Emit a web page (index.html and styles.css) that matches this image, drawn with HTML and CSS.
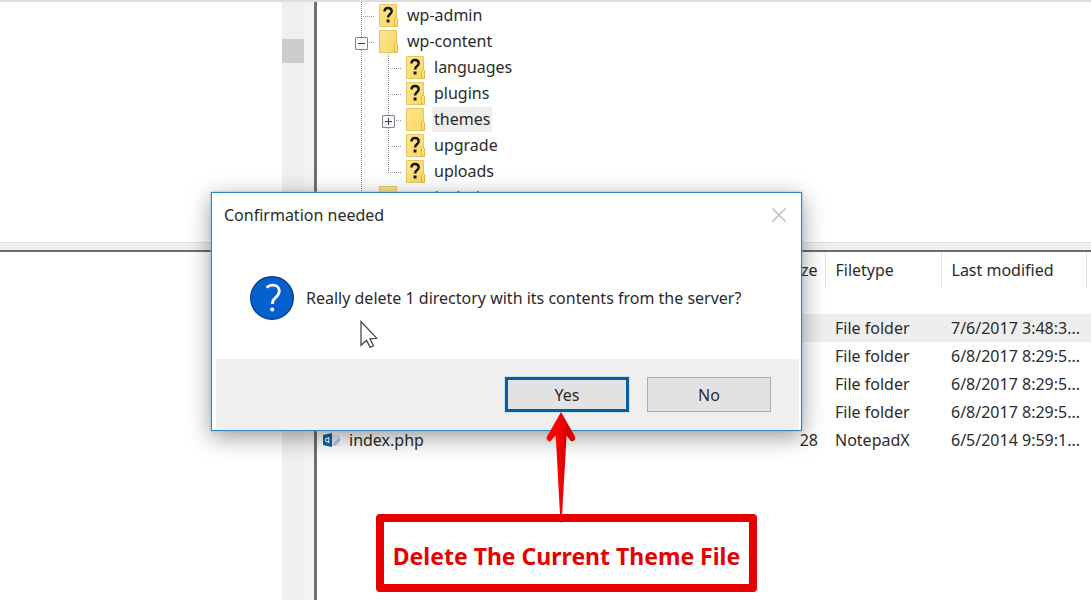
FILE: index.html
```html
<!DOCTYPE html>
<html lang="en">
<head>
<meta charset="utf-8">
<title>Confirmation needed</title>
<link rel="stylesheet" href="styles.css">
</head>
<body>
<svg class="defs" aria-hidden="true">
  <defs>
    <linearGradient id="gold" x1="0" y1="0" x2="1" y2="1">
      <stop offset="0" stop-color="#ffe58c"/><stop offset="1" stop-color="#f8d767"/>
    </linearGradient>
    <symbol id="folder" viewBox="0 0 19 23">
      <path d="M.5.5h17v14l1 1v7H.5z" fill="url(#gold)" stroke="#e6c660"/>
      <path d="M15.500 22v-7.500l1.500-1.500 1.500 1.500V22z" fill="#ffe07a" stroke="#e2b93c"/>
    </symbol>
    <symbol id="unknown" viewBox="0 0 19 23">
      <use href="#folder" width="19" height="23"/>
      <path d="M5.500 7.500C5.500 4.700 7 4 9 4s3.700 1 3.700 3.300c0 3-3.700 3-3.700 6.200" fill="none" stroke="#171717" stroke-width="2.400"/>
      <path d="M7.600 15.500h2.900v3H7.600z" fill="#171717"/>
    </symbol>
  </defs>
</svg>
<main class="app">
  <div class="band upper">
    <section class="local"><div class="track"><div class="thumb"></div></div></section>
    <section class="remote">
      <ul class="tree">
        <li><span class="guide tee"></span><svg class="folder"><use href="#unknown"/></svg><span class="label">wp-admin</span></li>
        <li><span class="guide tee"><button class="toggle" aria-label="Collapse wp-content"><svg viewBox="0 0 11 11"><path d="M2 5.500h7"/></svg></button></span><svg class="folder"><use href="#folder"/></svg><span class="label">wp-content</span></li>
        <li><span class="guide"></span><span class="guide tee"></span><svg class="folder"><use href="#unknown"/></svg><span class="label">languages</span></li>
        <li><span class="guide"></span><span class="guide tee"></span><svg class="folder"><use href="#unknown"/></svg><span class="label">plugins</span></li>
        <li><span class="guide"></span><span class="guide tee"><button class="toggle" aria-label="Expand themes"><svg viewBox="0 0 11 11"><path d="M2 5.500h7M5.500 2v7"/></svg></button></span><svg class="folder"><use href="#folder"/></svg><span class="label selected">themes</span></li>
        <li><span class="guide"></span><span class="guide tee"></span><svg class="folder"><use href="#unknown"/></svg><span class="label">upgrade</span></li>
        <li><span class="guide"></span><span class="guide tee last"></span><svg class="folder"><use href="#unknown"/></svg><span class="label">uploads</span></li>
        <li><span class="guide tee"></span><svg class="folder"><use href="#folder"/></svg><span class="label">wp-includes</span></li>
      </ul>
    </section>
  </div>
  <div class="splitter"></div>
  <div class="band lower">
    <section class="local"><div class="track"></div></section>
    <section class="remote">
      <table class="files">
        <colgroup><col><col class="c-size"><col class="c-type"><col class="c-date"><col class="c-end"></colgroup>
        <thead><tr><th></th><th class="num">Filesize</th><th>Filetype</th><th>Last modified</th><th></th></tr></thead>
        <tbody>
          <tr><td></td><td></td><td></td><td></td><td></td></tr>
          <tr class="selected"><td></td><td></td><td>File folder</td><td>7/6/2017 3:48:3...</td><td></td></tr>
          <tr><td></td><td></td><td>File folder</td><td>6/8/2017 8:29:5...</td><td></td></tr>
          <tr><td></td><td></td><td>File folder</td><td>6/8/2017 8:29:5...</td><td></td></tr>
          <tr><td></td><td></td><td>File folder</td><td>6/8/2017 8:29:5...</td><td></td></tr>
          <tr><td><div class="name"><svg class="php" viewBox="0 0 18 16"><path d="M8 3h9v11H8z" fill="#e9eef5"/><path d="M0 3l9-2v14l-9-2z" fill="#0a62b0"/><path d="M5.800 5.500v5L2.500 8.800V7.200z" fill="none" stroke="#e8f4ff" stroke-width="1.200"/><path d="M10.500 12.500l5-6 1.500 1.300-5 5.500z" fill="#c5cedb" stroke="#93a0b3" stroke-width=".6"/></svg>index.php</div></td><td class="num">28</td><td>NotepadX</td><td>6/5/2014 9:59:1...</td><td></td></tr>
        </tbody>
      </table>
    </section>
  </div>
</main>

<div class="dialog" role="dialog" aria-labelledby="dialog-title">
  <header class="titlebar">
    <h1 id="dialog-title">Confirmation needed</h1>
    <button class="close" aria-label="Close"><svg viewBox="0 0 16 16"><path d="M1.500 1.500l13 13M14.500 1.500l-13 13"/></svg></button>
  </header>
  <div class="message">
    <svg class="question" viewBox="0 0 44 44"><circle cx="22" cy="22" r="21.300" fill="#0560cd" stroke="#063f93" stroke-width="1.400"/><path d="M16.500 11.500c2-1.700 4-2.300 6.200-2.300 4 0 6.600 2.200 6.600 5.700 0 3-1.700 4.700-3.700 6.600-2.200 2-3.300 3.400-3.300 6.500" fill="none" stroke="#fff" stroke-width="2.800"/><circle cx="22.200" cy="33.500" r="2.100" fill="#fff"/></svg>
    <p>Really delete 1 directory with its contents from the server?</p>
  </div>
  <footer class="actions">
    <button class="btn primary">Yes</button>
    <button class="btn">No</button>
  </footer>
</div>

<svg class="cursor" viewBox="0 0 18 29"><path d="M1 1.500v23.800l5.500-4.900 3.600 7 3.400-1.700-3.500-6.800 6.800-.6z" fill="#fff" stroke="#4a4a4a" stroke-width="1.300"/></svg>
<svg class="arrow" viewBox="0 0 32 112">
  <defs><linearGradient id="red"><stop offset=".4" stop-color="#f80505"/><stop offset=".65" stop-color="#d90000"/></linearGradient></defs>
  <path d="M16 0L30 24.500C31.500 28 27 31 25 28L21.500 23.500C20 54 18 86 16.700 110.500H15.500C14 86 12.500 54 10.700 23.500L6.500 28C4.500 31 .5 28 2 24.500z" fill="url(#red)"/>
</svg>
<div class="callout">Delete The Current Theme File</div>
</body>
</html>
```
FILE: styles.css
```css
* { box-sizing: border-box; }
body {
  margin: 0;
  background: #fff;
  color: #2b2b2b;
  font: 16px/26px "Noto Sans", "Open Sans", sans-serif;
  overflow: hidden;
}
button { font: inherit; color: inherit; padding: 0; }
.defs { position: absolute; width: 0; height: 0; }

.app { display: flex; flex-direction: column; height: 100vh; border-top: 2px solid #dedede; }
.band { display: flex; min-height: 0; }
.upper { flex: 0 0 240px; }
.lower { flex: 1; }
.splitter { flex: 0 0 10px; background: #efefef; border-top: 1px solid #e0e0e0; border-bottom: 2px solid #6d6d6d; }

.local { flex: 0 0 314px; display: flex; justify-content: flex-end; border-right: 10px solid #f3f3f3; }
.track { width: 22px; background: #efefef; padding-top: 37px; }
.thumb { height: 24px; background: #cdcdcd; }
.remote { flex: 1; min-width: 0; border-left: 3px solid #707070; overflow: hidden; }

.tree { list-style: none; margin: 0; padding: 0 0 0 31px; }
.tree li { display: flex; align-items: center; height: 26px; }
.guide {
  width: 27px;
  height: 26px;
  display: flex;
  align-items: center;
  justify-content: center;
  background: repeating-linear-gradient(#888 0 1px, #fff 1px 2px) 13px 0 / 1px 26px no-repeat;
}
.tee {
  background:
    repeating-linear-gradient(#888 0 1px, #fff 1px 2px) 13px 0 / 1px 26px no-repeat,
    repeating-linear-gradient(90deg, #999 0 1px, #fff 1px 2px) 13px 14px / 14px 1px no-repeat;
}
.last {
  background:
    repeating-linear-gradient(#888 0 1px, #fff 1px 2px) 13px 0 / 1px 14px no-repeat,
    repeating-linear-gradient(90deg, #999 0 1px, #fff 1px 2px) 13px 14px / 14px 1px no-repeat;
}
.toggle { width: 13px; height: 13px; margin-top: 4px; border: 1px solid #858585; border-radius: 1px; background: #f7f7f7; display: flex; }
.toggle svg { width: 11px; height: 11px; stroke: #3d3d66; stroke-width: 1; }
.folder { width: 19px; height: 23px; margin-left: 4px; }
.label { margin-left: 7px; padding: 0 2px; line-height: 25px; }
.label.selected { background: #eee; }

.files { width: 100%; table-layout: fixed; border-collapse: collapse; white-space: nowrap; }
.c-size { width: 96px; }
.c-type { width: 116px; }
.c-date { width: 145px; }
.c-end { width: 5px; }
.files th { height: 36px; padding: 0 0 0 10px; font-weight: 400; text-align: left; border-right: 1px solid #e0e0e0; }
.files th:first-child, .files th:last-child { border-right: 0; }
.files td { height: 28px; padding: 0 0 0 10px; line-height: 26px; }
.files tbody tr:first-child td { height: 26px; }
.files th:last-child, .files td:last-child { padding: 0; }
.files td:first-child { padding-left: 6px; }
.files .num { text-align: right; padding-right: 7px; }
.files .selected { background: #eee; }
.name { display: flex; align-items: center; gap: 8px; }
.php { width: 18px; height: 16px; }

.dialog {
  position: absolute;
  left: 211px;
  top: 192px;
  width: 591px;
  background: #fff;
  border: 1px solid #2f84c4;
  box-shadow: 0 0 2px #5cc3ff, 0 6px 22px rgba(0, 0, 0, .4);
}
.titlebar { display: flex; justify-content: space-between; align-items: center; height: 43px; padding: 0 14px 0 12px; }
.titlebar h1 { margin: 0; font-size: 16px; font-weight: 400; }
.close { width: 16px; height: 16px; border: 0; background: none; display: flex; }
.close svg { width: 16px; height: 16px; stroke: #bdbdbd; stroke-width: 1.500; }
.message { display: flex; align-items: center; gap: 12px; height: 123px; padding: 0 38px; white-space: nowrap; }
.message p { margin: 0; }
.question { width: 44px; height: 44px; flex: none; }
.actions { display: flex; justify-content: flex-end; gap: 18px; margin: 0 2px 0 4px; padding: 18px 28px; background: #efefef; }
.btn { width: 124px; height: 35px; background: #e2e2e2; border: 1px solid #adadad; }
.primary { border: 3px solid #075ca8; box-shadow: 0 0 1px #1cb0ff; }

.cursor { position: absolute; left: 360px; top: 320px; width: 18px; height: 29px; }
.arrow { position: absolute; left: 545px; top: 412px; width: 32px; height: 112px; z-index: 2; }
.callout {
  position: absolute;
  left: 376px;
  top: 514px;
  width: 381px;
  padding: 21px 0 15px;
  border: 8px solid #e60000;
  border-radius: 4px;
  background: #fff;
  color: #e60000;
  font-size: 23px;
  font-weight: 700;
  text-align: center;
  white-space: nowrap;
}
```
